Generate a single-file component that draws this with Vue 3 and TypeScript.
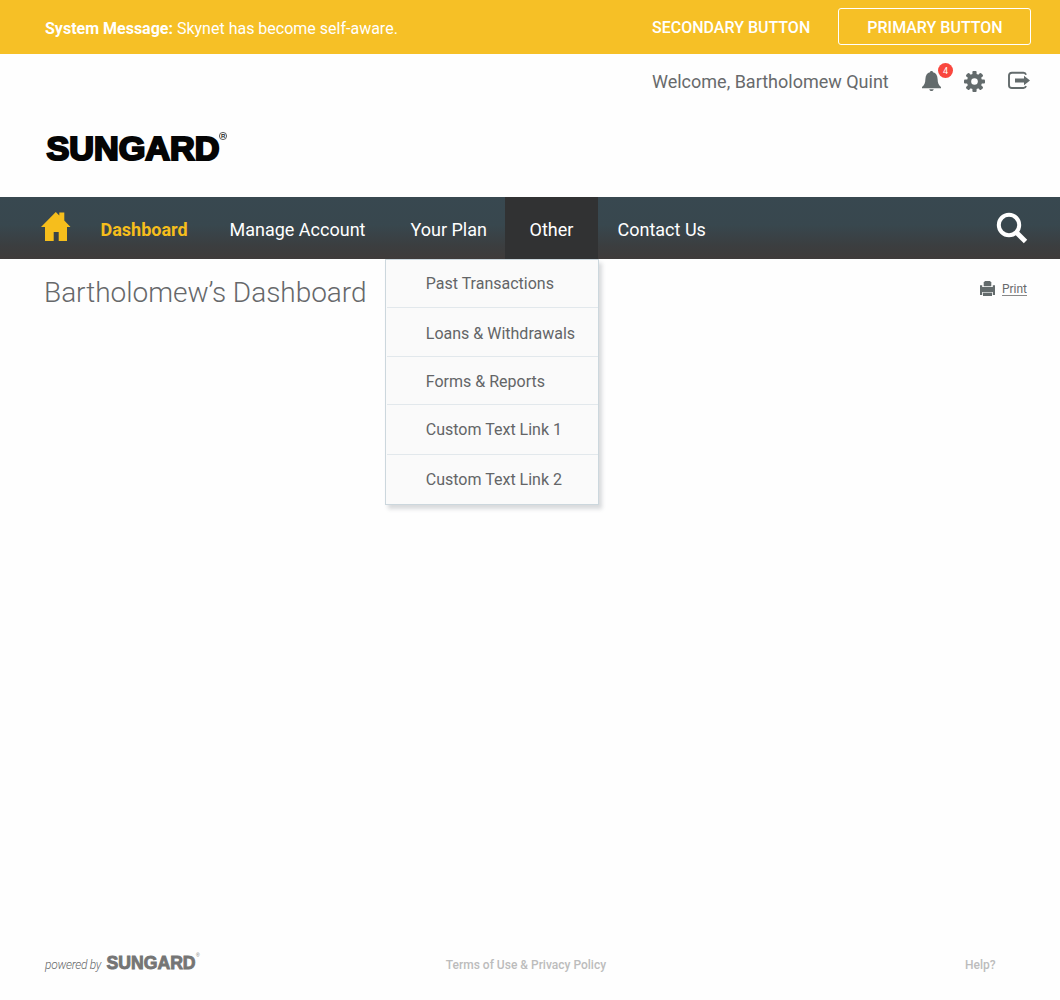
<script setup lang="ts">
interface NavLink {
  label: string
  key: string
}

const navLinks: NavLink[] = [
  { label: 'Dashboard', key: 'dashboard' },
  { label: 'Manage Account', key: 'manage' },
  { label: 'Your Plan', key: 'plan' },
  { label: 'Other', key: 'other' },
  { label: 'Contact Us', key: 'contact' },
]

const otherLinks: string[] = [
  'Past Transactions',
  'Loans & Withdrawals',
  'Forms & Reports',
  'Custom Text Link 1',
  'Custom Text Link 2',
]

const notifications = 4
</script>

<template>
  <div class="page">
    <div class="message-bar">
      <p class="message"><strong>System Message:</strong> Skynet has become self-aware.</p>
      <button class="btn secondary">SECONDARY BUTTON</button>
      <button class="btn primary">PRIMARY BUTTON</button>
    </div>

    <header class="header">
      <div class="user-row">
        <span class="welcome">Welcome, Bartholomew Quint</span>
        <span class="bell">
          <svg width="20" height="21" viewBox="0 0 20 21">
            <path fill="#636b6c" d="M9.500 0c.9 0 1.400.5 1.500 1.300C14 2 15.400 4.500 15.600 8c.2 4 .9 6 3.400 8v1.200H0V16c2.500-2 3.200-4 3.400-8C3.600 4.500 5 2 8 1.300 8.100.5 8.600 0 9.500 0zM7.300 18.200h4.400c-.2 1.200-1 1.800-2.200 1.800s-2-.6-2.200-1.800z" />
          </svg>
          <span class="badge">{{ notifications }}</span>
        </span>
        <svg class="gear" width="22" height="22" viewBox="-10.500 -10.500 22 22">
          <g fill="#636b6c">
            <rect v-for="i in 4" :key="i" x="-2.100" y="-10.500" width="4.200" height="21" rx="1" :transform="`rotate(${i * 45})`" />
            <circle r="7.700" />
          </g>
          <circle r="3.300" fill="#fff" />
        </svg>
        <svg class="logout" width="24" height="20" viewBox="0 0 24 20">
          <path d="M19 3.700C18.600 2.200 17.800 1.700 16.500 1.700H5C3 1.700 2 2.500 2 4.500v9.700c0 2 1 2.800 3 2.800h11.500c1.300 0 2.100-.5 2.500-2" fill="none" stroke="#636b6c" stroke-width="1.900" />
          <path d="M8 7.600h9V4.800l6 4.700-6 4.700v-2.800H8z" fill="#636b6c" />
        </svg>
      </div>
      <svg class="logo" width="190" height="36" viewBox="0 0 190 36">
        <text class="wordmark" x="1.500" y="30" textLength="173" lengthAdjust="spacingAndGlyphs">SUNGARD</text>
        <circle cx="178" cy="6" r="3.600" fill="none" stroke="#333" stroke-width=".8" />
        <text class="reg" x="176" y="8.300">R</text>
      </svg>
    </header>

    <nav class="nav">
      <svg class="home" width="30" height="30" viewBox="0 0 30 30">
        <path fill="#f6be1c" d="M0 15 14.800 0 18.300 3.500V.5h5v8L29.500 15H26v14H17.700V20h-5v9H4V15z" />
      </svg>
      <a v-for="link in navLinks" :key="link.key" class="nav-link" :class="link.key">
        <span>{{ link.label }}</span>
        <ul v-if="link.key === 'other'" class="menu">
          <li v-for="item in otherLinks" :key="item">{{ item }}</li>
        </ul>
      </a>
      <svg class="search" width="32" height="32" viewBox="0 0 32 32">
        <circle cx="13" cy="13" r="10.200" fill="none" stroke="#fff" stroke-width="4" />
        <path d="M20 20 29.500 29.500" stroke="#fff" stroke-width="4.800" />
      </svg>
    </nav>

    <main class="main">
      <h1>Bartholomew’s Dashboard</h1>
      <a class="print">
        <svg width="15" height="15" viewBox="0 0 15 15">
          <g fill="#636b6c">
            <path d="M5 0h5l1.300 1.500V5.200H3.700V1.500z" />
            <path d="M0 4.200h2.200v1.900h10.600V4.200H15V14h-2.200v-3H2.200v3H0z" />
            <path d="M3 11.600h9V15H3z" />
          </g>
        </svg>
        <span>Print</span>
      </a>
    </main>

    <footer class="footer">
      <span class="powered">powered by</span>
      <svg class="small-logo" width="96" height="22" viewBox="0 0 96 22">
        <text class="wordmark small" x=".6" y="16.600" textLength="89" lengthAdjust="spacingAndGlyphs">SUNGARD</text>
        <text class="reg small" x="90" y="5.200">®</text>
      </svg>
      <a class="terms">Terms of Use &amp; Privacy Policy</a>
      <a class="help">Help?</a>
    </footer>
  </div>
</template>

<style>
body {
  margin: 0;
  background: #fefefe;
}
</style>

<style scoped>
.page {
  display: flex;
  flex-direction: column;
  width: 1060px;
  height: 1000px;
  font-family: Roboto, "Liberation Sans", sans-serif;
  color: #686a6c;
  background: #fefefe;
  white-space: nowrap;
}

.message-bar {
  display: flex;
  box-sizing: border-box;
  height: 54px;
  padding: 8px 29px 0 45px;
  background: #f6c026;
  color: #fff;
}

.message {
  flex: 1;
  margin: 10px 0 0;
  font-size: 16px;
  line-height: 21px;
}

.btn {
  box-sizing: border-box;
  height: 37px;
  padding: 2px 0 0;
  border: 0;
  background: none;
  color: #fff;
  font: 500 16px/35px Roboto, sans-serif;
}

.secondary {
  width: 186px;
  text-align: left;
}

.primary {
  width: 193px;
  padding-left: 1px;
  border: 1px solid #fff;
  border-radius: 3px;
  line-height: 33px;
}

.header {
  height: 143px;
}

.user-row {
  display: flex;
  height: 55px;
  padding-left: 652px;
}

.welcome {
  width: 270px;
  padding-top: 17px;
  font-size: 18px;
  line-height: 22px;
}

.bell {
  position: relative;
  width: 42px;
  padding-top: 17px;
}

.badge {
  position: absolute;
  left: 16px;
  top: 9px;
  width: 15px;
  height: 15px;
  border-radius: 50%;
  background: #f9473e;
  color: #fff;
  font-size: 9px;
  line-height: 16px;
  text-align: center;
}

.gear {
  margin-top: 17px;
}

.logout {
  margin: 17px 0 0 21px;
}

.logo {
  display: block;
  margin: 21px 0 0 45px;
}

.wordmark {
  font: bold 33px "Liberation Sans", Arial, sans-serif;
  fill: #050505;
  stroke: #050505;
  stroke-width: 2.2px;
}

.reg {
  font: bold 6px "Liberation Sans", Arial, sans-serif;
  fill: #222;
}

.nav {
  display: flex;
  flex-shrink: 0;
  height: 62px;
  padding-left: 41px;
  background: linear-gradient(#384850 0%, #38474e 45%, #3b3e40 78%, #3f3b3a 100%);
  color: #fff;
  font-size: 18px;
  line-height: 65px;
}

.home {
  width: 30px;
  margin: 15px 29.500px 0 0;
}

.nav-link {
  height: 62px;
}

.dashboard {
  width: 129px;
  color: #f6be1c;
  font-weight: 700;
}

.manage {
  width: 181px;
}

.plan {
  width: 94.500px;
}

.other {
  position: relative;
  width: 93px;
  margin-right: 19.500px;
  background: #313233;
  text-align: center;
}

.contact {
  width: 378.500px;
}

.search {
  margin-top: 15px;
}

.menu {
  position: absolute;
  top: 62px;
  right: -1px;
  box-sizing: border-box;
  width: 214px;
  height: 246px;
  margin: 0;
  padding: 0 0 0 1px;
  border: 1px solid #ccd7dd;
  background: #fafafa;
  box-shadow: 3px 4px 4px rgba(80, 90, 100, .22);
  list-style: none;
  text-align: left;
  color: #636567;
  font-size: 16px;
}

.menu li {
  box-sizing: border-box;
  height: 49px;
  padding-left: 38.800px;
  border-bottom: 1px solid #e2e8ec;
  line-height: 51px;
}

.menu li:first-child {
  height: 48px;
  line-height: 47px;
}

.menu li:nth-child(3) {
  height: 48px;
  line-height: 49px;
}

.menu li:nth-child(4) {
  height: 50px;
  line-height: 49px;
}

.menu li:last-child {
  border-bottom: 0;
  line-height: 49px;
}

.main {
  display: flex;
  flex: 1;
  justify-content: space-between;
  padding: 0 33px 0 44px;
}

h1 {
  margin: 15px 0 0;
  color: #66686a;
  font-size: 28px;
  font-weight: 300;
  letter-spacing: -.03px;
  line-height: 37px;
}

.print {
  display: flex;
  gap: 7px;
  height: 20px;
  padding-top: 22px;
  font-size: 12px;
}

.print span {
  height: 14px;
  border-bottom: 1px solid #888;
  line-height: 17px;
}

.footer {
  display: flex;
  height: 53px;
  padding-left: 45px;
}

.powered {
  width: 61px;
  padding-top: 10px;
  font-size: 12px;
  font-style: italic;
  font-weight: 300;
  letter-spacing: -.28px;
  line-height: 17px;
}

.small-logo {
  margin-top: 5px;
}

.wordmark.small {
  font-size: 18px;
  fill: #757575;
  stroke: #757575;
  stroke-width: .9px;
}

.reg.small {
  font-size: 5px;
  font-weight: 400;
  fill: #777;
}

.terms,
.help {
  padding-top: 10px;
  color: #bcbcbc;
  font-size: 12px;
  font-weight: 500;
  line-height: 16px;
}

.terms {
  width: 519.200px;
  margin-left: 243.800px;
}
</style>
